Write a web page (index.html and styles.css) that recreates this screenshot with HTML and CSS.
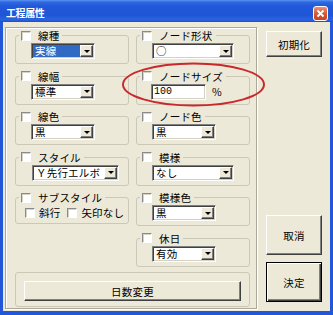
FILE: index.html
```html
<!DOCTYPE html>
<html lang="ja">
<head>
  <meta charset="utf-8">
  <title>工程属性</title>
  <link rel="stylesheet" href="styles.css">
</head>
<body>
<div class="window">
  <header class="titlebar">
    <h1>工程属性</h1>
    <button class="close-btn" aria-label="閉じる">
      <svg width="9" height="9" viewBox="0 0 9 9"><path d="M1.5 1.5L7.5 7.5M7.5 1.5L1.5 7.5" stroke="#fff" stroke-width="1.8"/></svg>
    </button>
  </header>

  <div class="client">
    <div class="panel">
      <div class="groups">
        <!-- row 1 -->
        <fieldset class="group">
          <legend><span class="caption"><span class="check"></span>線種</span></legend>
          <div class="combo"><span class="value selected">実線</span><span class="drop"></span></div>
        </fieldset>
        <fieldset class="group right">
          <legend><span class="caption"><span class="check"></span>ノード形状</span></legend>
          <div class="combo long"><span class="value">○</span><span class="drop"></span></div>
        </fieldset>

        <!-- row 2 -->
        <fieldset class="group">
          <legend><span class="caption"><span class="check"></span>線幅</span></legend>
          <div class="combo"><span class="value">標準</span><span class="drop"></span></div>
        </fieldset>
        <fieldset class="group right">
          <legend><span class="caption"><span class="check"></span>ノードサイズ</span></legend>
          <div class="size-row">
            <span class="field">100</span>
            <span class="unit">%</span>
          </div>
        </fieldset>

        <!-- row 3 -->
        <fieldset class="group">
          <legend><span class="caption"><span class="check"></span>線色</span></legend>
          <div class="combo"><span class="value">黒</span><span class="drop"></span></div>
        </fieldset>
        <fieldset class="group right">
          <legend><span class="caption"><span class="check"></span>ノード色</span></legend>
          <div class="combo"><span class="value">黒</span><span class="drop"></span></div>
        </fieldset>

        <!-- row 4 -->
        <fieldset class="group">
          <legend><span class="caption"><span class="check"></span>スタイル</span></legend>
          <div class="combo wide"><span class="value">Ｙ先行エルボ</span><span class="drop"></span></div>
        </fieldset>
        <fieldset class="group right">
          <legend><span class="caption"><span class="check"></span>模様</span></legend>
          <div class="combo long"><span class="value">なし</span><span class="drop"></span></div>
        </fieldset>

        <!-- row 5 -->
        <fieldset class="group sub">
          <legend><span class="caption"><span class="check"></span>サブスタイル</span></legend>
          <div class="checks">
            <span class="opt"><span class="check"></span>斜行</span>
            <span class="opt"><span class="check"></span>矢印なし</span>
          </div>
        </fieldset>
        <fieldset class="group right">
          <legend><span class="caption"><span class="check"></span>模様色</span></legend>
          <div class="combo"><span class="value">黒</span><span class="drop"></span></div>
        </fieldset>

        <!-- row 6 -->
        <fieldset class="group right holiday">
          <legend><span class="caption"><span class="check"></span>休日</span></legend>
          <div class="combo"><span class="value">有効</span><span class="drop"></span></div>
        </fieldset>
      </div>

      <div class="days-box">
        <button class="btn days-btn">日数変更</button>
      </div>
    </div>

    <div class="side">
      <button class="btn init-btn">初期化</button>
      <button class="btn cancel-btn">取消</button>
      <button class="btn ok-btn">決定</button>
    </div>
  </div>

  <!-- red annotation ring -->
  <svg class="annotation" width="146" height="46" viewBox="0 0 146 46">
    <ellipse cx="72.5" cy="22.5" rx="70.5" ry="21" fill="none" stroke="#c9292c" stroke-width="2"/>
  </svg>
</div>
</body>
</html>
```

FILE: styles.css
```css
* {
  box-sizing: border-box;
}

html, body {
  margin: 0;
  padding: 0;
}

body {
  width: 333px;
  height: 315px;
  overflow: hidden;
  background: #fff;
  font-family: "Noto Sans CJK JP", sans-serif;
  font-size: 10.5px;
  letter-spacing: 0.2px;
  color: #000;
}

.window {
  position: relative;
  width: 333px;
  height: 315px;
  display: flex;
  flex-direction: column;
}

/* title bar */
.titlebar {
  height: 22px;
  flex: none;
  display: flex;
  align-items: flex-start;
  justify-content: space-between;
  padding: 0 5px 0 6px;
  background: linear-gradient(to bottom, #5d95f1 0, #2f69e3 2px, #2158d9 6px, #1e56d7 15px, #2b63df 20px, #1a4ccb 22px);
}

.titlebar h1 {
  margin: 7px 0 0;
  font-size: 10px;
  line-height: 12px;
  font-weight: bold;
  letter-spacing: -0.4px;
  color: #fff;
}

.close-btn {
  width: 15px;
  height: 15px;
  margin-top: 6px;
  padding: 0;
  border: 1px solid #fff;
  border-radius: 3px;
  background: linear-gradient(to bottom, #ec9070, #d95a35 50%, #c5441f);
  display: flex;
  align-items: center;
  justify-content: center;
}

/* client area */
.client {
  flex: 1;
  display: flex;
  background: #ece9d8;
  border: solid #2157d8;
  border-width: 0 3px 4px;
  padding: 5px 0 0 2px;
}

.panel {
  width: 252px;
  align-self: flex-start;
  border: 1px solid #aca899;
  box-shadow: inset 1px 1px 0 #fff, 1px 1px 0 #fff;
  padding: 1px 6px 1px 9px;
}

.groups {
  display: grid;
  grid-template-columns: 114px 114px;
  grid-auto-rows: 35px;
  column-gap: 7px;
  row-gap: 5.5px;
}

.group {
  margin: 0;
  min-width: 0;
  border: 1px solid #cbc8b8;
  border-radius: 3px;
  padding: 1px 3px 4px;
}

.group legend {
  padding: 0 3px 0 2px;
  height: 13px;
}

.caption {
  display: flex;
  align-items: center;
  gap: 7px;
  height: 13px;
  line-height: 13px;
  white-space: nowrap;
}

.check {
  width: 10px;
  height: 10px;
  flex: none;
  background: #fff;
  border: 1px solid;
  border-color: #8a8a8a #fff #fff #8a8a8a;
  box-shadow: inset 1px 1px 0 #d6d3c6;
}

/* combo boxes */
.combo {
  display: flex;
  width: 64px;
  height: 16px;
  margin-left: 12px;
  background: #fff;
  border: 1px solid;
  border-color: #808080 #fff #fff #808080;
  box-shadow: inset 1px 1px 0 #404040, inset -1px -1px 0 #d4d0c8;
  padding: 1px;
}

.combo.long {
  width: 82px;
}

.combo.wide {
  width: 87px;
  margin-left: 13px;
}

.value {
  flex: 1;
  height: 12px;
  line-height: 12px;
  padding-left: 2px;
  white-space: nowrap;
}

.value.selected {
  background: #316ac5;
  color: #fff;
}

.drop {
  width: 13px;
  flex: none;
  display: flex;
  align-items: center;
  justify-content: center;
  background: #ece9d8;
  border: 1px solid;
  border-color: #fff #404040 #404040 #fff;
  box-shadow: inset -1px -1px 0 #808080;
}

.drop::after {
  content: "";
  border-left: 3px solid transparent;
  border-right: 3px solid transparent;
  border-top: 3px solid #000;
}

/* node size input */
.size-row {
  display: flex;
  align-items: center;
  margin-left: 11px;
}

.field {
  width: 55px;
  height: 16px;
  background: #fff;
  border: 1px solid;
  border-color: #808080 #fff #fff #808080;
  box-shadow: inset 1px 1px 0 #404040, inset -1px -1px 0 #d4d0c8;
  padding-left: 2px;
  font-family: "Liberation Mono", monospace;
  font-size: 10px;
  letter-spacing: 0;
  line-height: 14px;
}

.unit {
  margin-left: 6px;
  font-size: 10.5px;
}

/* sub style */
.group.sub {
  align-self: start;
  padding-bottom: 3px;
}

.checks {
  display: flex;
  align-items: center;
  gap: 7px;
  height: 15px;
  margin-left: 6px;
  white-space: nowrap;
}

.opt {
  display: flex;
  flex: none;
  align-items: center;
  gap: 4px;
}

.group.holiday {
  grid-column: 2;
}

/* buttons */
.btn {
  display: flex;
  align-items: center;
  justify-content: center;
  padding: 0;
  background: #ece9d8;
  border: 1px solid;
  border-color: #fff #404040 #404040 #fff;
  box-shadow: inset -1px -1px 0 #808080;
  font: inherit;
  letter-spacing: 0.2px;
  color: #000;
}

.days-box {
  margin-top: 5.5px;
  width: 235px;
  border: 1px solid #cbc8b8;
  border-radius: 3px;
  padding: 8px 8px 5px;
}

.days-btn {
  width: 100%;
  height: 20px;
}

.side {
  width: 56px;
  margin-left: 9px;
  display: flex;
  flex-direction: column;
  padding: 4px 0 9px;
}

.init-btn {
  height: 26px;
}

.cancel-btn {
  height: 40px;
  margin-top: auto;
}

.ok-btn {
  height: 40px;
  margin-top: 7px;
  border-color: #000;
  box-shadow: inset 1px 1px 0 #fff, inset -1px -1px 0 #404040, inset -2px -2px 0 #808080;
}

/* red ring drawn over the node size group */
.annotation {
  position: absolute;
  left: 121px;
  top: 62px;
  pointer-events: none;
}
```
